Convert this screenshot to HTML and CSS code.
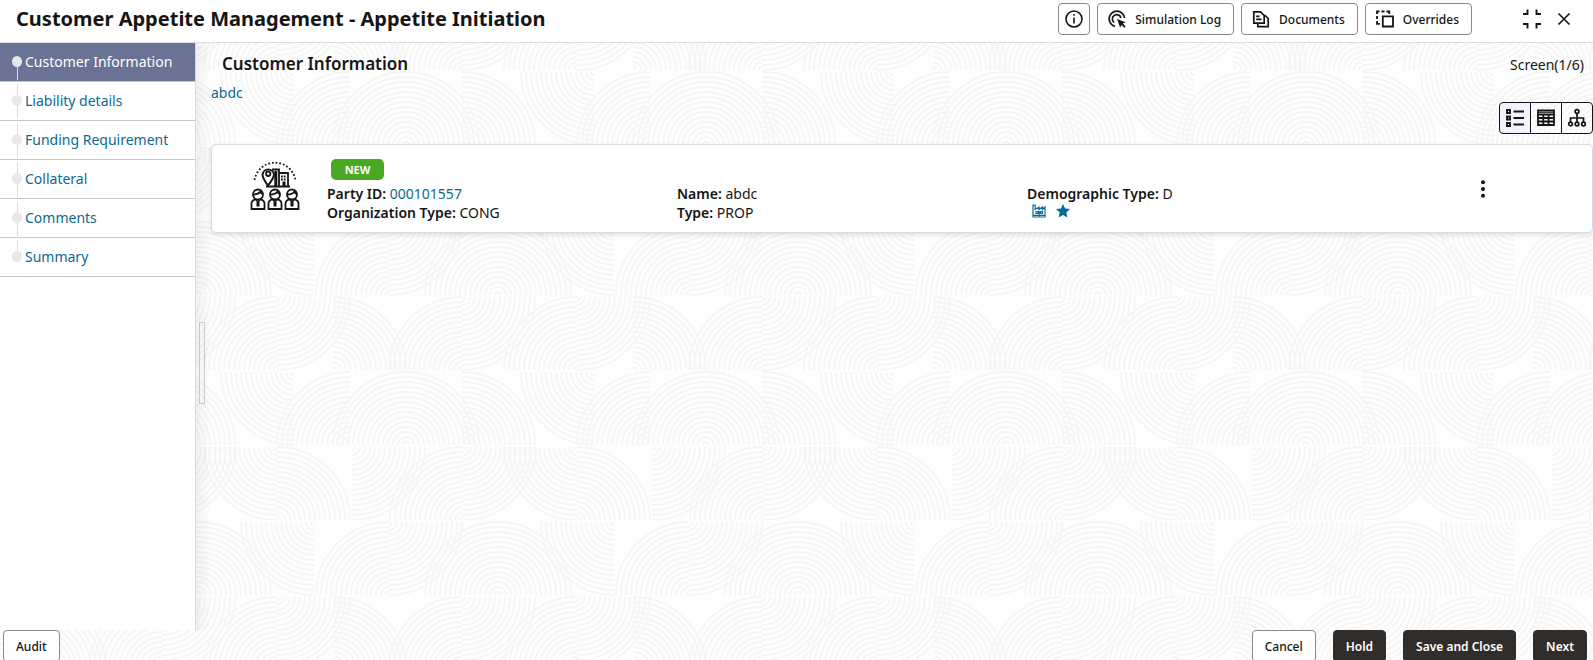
FILE: index.html
```
<!DOCTYPE html>
<html lang="en">
<head>
  <meta charset="UTF-8" />
  <meta name="viewport" content="width=device-width, initial-scale=1.0"/>
  <title>Customer Appetite Management</title>
  <link rel="stylesheet" href="styles.css">
</head>
<body>
  <header class="topbar">
    <h1>Customer Appetite Management - Appetite Initiation</h1>
    <div class="actions">
      <button class="btn btn-info" type="button" aria-label="Information">
        <svg width="20" height="20" viewBox="0 0 20 20" fill="none" stroke="#161513" stroke-width="1.6"><circle cx="10" cy="10" r="8"/><path d="M10 8.5V14.5M10 5V6.8"/></svg>
      </button>
      <button class="btn" type="button">
        <svg width="18" height="18" viewBox="0 0 18 18" fill="none" stroke="#161513" stroke-width="1.7"><path d="M7 16.3A7.7 7.7 0 1 1 16.5 8"/><path d="M6.2 12.6A4.4 4.4 0 1 1 13 8"/><path d="M9 9L17.6 12.2L14.8 13.6L17.6 16.6L16.4 17.8L13.5 14.9L12.1 17.6Z" fill="#161513" stroke="none"/></svg>
        Simulation Log
      </button>
      <button class="btn" type="button">
        <svg width="18" height="18" viewBox="0 0 18 18" fill="none" stroke="#161513" stroke-width="1.7"><path d="M1.8 1.8H8.5L12.2 5.5V13.2H1.8Z"/><path d="M4.2 6.3H7.5M4.2 9.3H9.5M5.8 13.5V16.6H16.2V8.5L12.5 5"/></svg>
        Documents
      </button>
      <button class="btn" type="button">
        <svg width="18" height="18" viewBox="0 0 18 18" fill="none" stroke="#161513" stroke-width="1.8"><path d="M6.8 6.3H17V16.5H6.8Z"/><path d="M1 4V1.5H3.5M5.5 1.5H8.5M10.5 1.5H13.3V4M1 6V9M1 11V13.8H3.8"/></svg>
        Overrides
      </button>
      <div class="window-tools">
        <button class="icon-btn" type="button" aria-label="Collapse">
          <svg width="20" height="20" viewBox="0 0 20 20" fill="none" stroke="#161513" stroke-width="1.9"><path d="M1 5H5.5V0.5M14.5 0.5V5H19M1 15H5.5V19.5M14.5 19.5V15H19"/></svg>
        </button>
        <button class="icon-btn" type="button" aria-label="Close">
          <svg width="14" height="14" viewBox="0 0 14 14" fill="none" stroke="#161513" stroke-width="1.6"><path d="M1.5 1.5L12.5 12.5M12.5 1.5L1.5 12.5"/></svg>
        </button>
      </div>
    </div>
  </header>

  <div class="layout">
    <nav class="steps">
      <a class="step active" href="#info">Customer Information</a>
      <a class="step" href="#liability">Liability details</a>
      <a class="step" href="#funding">Funding Requirement</a>
      <a class="step" href="#collateral">Collateral</a>
      <a class="step" href="#comments">Comments</a>
      <a class="step" href="#summary">Summary</a>
    </nav>

    <div class="splitter"><span class="handle"></span></div>

    <main class="content">
      <div class="heading">
        <h2>Customer Information</h2>
        <span>Screen(1/6)</span>
      </div>
      <a class="crumb" href="#abdc">abdc</a>

      <div class="views">
        <button class="view selected" type="button" aria-label="List view">
          <svg width="20" height="20" viewBox="0 0 20 20" fill="none" stroke="#161513" stroke-width="1.9"><path d="M2 2H5V5H2ZM2 8.5H5V11.5H2ZM2 15H5V18H2ZM8.5 3.5H19M8.5 10H19M8.5 16.5H19"/></svg>
        </button>
        <button class="view" type="button" aria-label="Table view">
          <svg width="20" height="20" viewBox="0 0 20 20" fill="none" stroke="#161513" stroke-width="1.8"><path d="M2 2.5H18V17H2ZM2 6.5H18M2 10H18M2 13.5H18M7.3 6.5V17M12.6 6.5V17"/><path d="M2 4.3H18" stroke-width="1"/></svg>
        </button>
        <button class="view" type="button" aria-label="Tree view">
          <svg width="20" height="20" viewBox="0 0 20 20" fill="none" stroke="#161513" stroke-width="1.7"><circle cx="10" cy="3.5" r="1.9"/><circle cx="3.5" cy="16" r="1.8"/><circle cx="10" cy="16" r="1.8"/><circle cx="16.5" cy="16" r="1.8"/><path d="M10 5.5V14M3.5 14V10H16.5V14"/></svg>
        </button>
      </div>

      <section class="card">
        <svg class="portrait" width="50" height="50" viewBox="0 0 50 50" fill="none" stroke="#161513" stroke-width="1.8">
          <path d="M4.5 20A20.8 20.8 0 0 1 45.5 20" stroke-width="1.8" stroke-dasharray="1.8 1.9"/>
          <path d="M18 25.5C15 21.5 12.5 18 12.5 14.5A5.8 5.8 0 0 1 24 14.5C24 18 21 21.5 18 25.5Z" stroke-width="2"/>
          <circle cx="18.2" cy="13.8" r="2.2"/>
          <path d="M22 9.5H29V26M29 13H38V26M16 26.5H40"/>
          <path d="M25.8 11V26M34 21.5V26" stroke-width="3"/>
          <path d="M31 16.5H36.5M31 19.5H36.5" stroke-dasharray="1.8 1"/>
          <g id="person">
            <circle cx="8" cy="34.5" r="5"/>
            <path d="M3 34.5C7 34.5 9.5 33 10.5 31.5C11 33 12 34 13 34.5M1.5 49V43.5C1.5 41 3.5 40 5.5 39.2L8 42L10.5 39.2C12.5 40 14.5 41 14.5 43.5V49Z"/>
            <path d="M8 42V46.5" stroke-width="3"/>
          </g>
          <use href="#person" x="17"/>
          <use href="#person" x="34"/>
        </svg>
        <div class="party">
          <span class="badge">NEW</span>
          <div class="fields">
            <p><b>Party ID:</b> <a href="#party">000101557</a></p>
            <p><b>Name:</b> abdc</p>
            <p><b>Demographic Type:</b> D</p>
            <p><b>Organization Type:</b> CONG</p>
            <p><b>Type:</b> PROP</p>
            <p class="marks">
              <svg width="14" height="14" viewBox="0 0 14 14" fill="none" stroke="#0b6a93" stroke-width="1.2"><path d="M1 13V1H3.2V5.5L7 3V5.5L10.5 3V5.5L13 3V13ZM4 7.5H6V9.5H4ZM8.5 7.5H10.5V9.5H8.5ZM1 11.3H13M7.2 7V13"/></svg>
              <svg width="14" height="14" viewBox="0 0 14 14" fill="#0b6a93"><path d="M7 0L9.1 4.6L14 5.1L10.3 8.5L11.4 13.5L7 10.9L2.6 13.5L3.7 8.5L0 5.1L4.9 4.6Z"/></svg>
            </p>
          </div>
        </div>
        <button class="icon-btn kebab" type="button" aria-label="More actions">
          <svg width="20" height="20" viewBox="0 0 20 20" fill="#161513"><circle cx="10" cy="3.3" r="2"/><circle cx="10" cy="10" r="2"/><circle cx="10" cy="16.7" r="2"/></svg>
        </button>
      </section>
    </main>
  </div>

  <footer class="footer">
    <button class="btn" type="button">Audit</button>
    <div class="footer-actions">
      <button class="btn" type="button">Cancel</button>
      <button class="btn btn-dark" type="button">Hold</button>
      <button class="btn btn-dark" type="button">Save and Close</button>
      <button class="btn btn-dark" type="button">Next</button>
    </div>
  </footer>
</body>
</html>
```
FILE: styles.css
```
* {
  box-sizing: border-box;
}
body {
  margin: 0;
  height: 100vh;
  overflow: hidden;
  display: flex;
  flex-direction: column;
  font-family: "Noto Sans", sans-serif;
  font-size: 14px;
  line-height: 19px;
  color: #161513;
  background-color: #fefefe;
  /* rows of quarter circles, 75px high, repeating every 300px */
  background-image: url("data:image/svg+xml,%3Csvg xmlns='http://www.w3.org/2000/svg' width='300' height='300'%3E%3Cdefs%3E%3Cpath id='q' d='M3 0A3 3 0 0 1 0 3M8 0A8 8 0 0 1 0 8M13 0A13 13 0 0 1 0 13M18 0A18 18 0 0 1 0 18M23 0A23 23 0 0 1 0 23M28 0A28 28 0 0 1 0 28M33 0A33 33 0 0 1 0 33M38 0A38 38 0 0 1 0 38M43 0A43 43 0 0 1 0 43M48 0A48 48 0 0 1 0 48M53 0A53 53 0 0 1 0 53M58 0A58 58 0 0 1 0 58M63 0A63 63 0 0 1 0 63M68 0A68 68 0 0 1 0 68M73 0A73 73 0 0 1 0 73'/%3E%3Cg id='dr'%3E%3Cuse href='%23q'/%3E%3C/g%3E%3Cg id='dl'%3E%3Cuse href='%23q' transform='scale(-1 1)'/%3E%3C/g%3E%3Cg id='ur'%3E%3Cuse href='%23q' transform='scale(1 -1)'/%3E%3C/g%3E%3Cg id='ul'%3E%3Cuse href='%23q' transform='scale(-1 -1)'/%3E%3C/g%3E%3C/defs%3E%3Cg fill='none' stroke='%23f5f5f5' stroke-width='1.8'%3E%3Cuse href='%23ur' x='198' y='75'/%3E%3Cuse href='%23ul' x='198' y='75'/%3E%3Cuse href='%23dl' x='14' y='2'/%3E%3Cuse href='%23dl' x='314' y='2'/%3E%3Cuse href='%23ul' x='89' y='75'/%3E%3Cuse href='%23dr' x='89' y='2'/%3E%3Cuse href='%23ul' x='277' y='150'/%3E%3Cuse href='%23dr' x='277' y='77'/%3E%3Cuse href='%23dr' x='-23' y='77'/%3E%3Cuse href='%23ur' x='33' y='150'/%3E%3Cuse href='%23ul' x='162' y='150'/%3E%3Cuse href='%23dr' x='162' y='77'/%3E%3Cuse href='%23dl' x='294' y='152'/%3E%3Cuse href='%23ul' x='50' y='225'/%3E%3Cuse href='%23ul' x='350' y='225'/%3E%3Cuse href='%23ul' x='106' y='225'/%3E%3Cuse href='%23ur' x='106' y='225'/%3E%3Cuse href='%23ur' x='162' y='225'/%3E%3Cuse href='%23dl' x='277' y='227'/%3E%3Cuse href='%23ur' x='277' y='300'/%3E%3Cuse href='%23ur' x='-23' y='300'/%3E%3Cuse href='%23dr' x='52' y='227'/%3E%3Cuse href='%23ul' x='163' y='300'/%3E%3Cuse href='%23dr' x='163' y='227'/%3E%3C/g%3E%3C/svg%3E");
  background-position: 0 -80px;
}
h1, h2, p {
  margin: 0;
}
h1 {
  font-size: 20px;
  line-height: 28px;
  font-weight: 700;
}
h2 {
  font-size: 17px;
  line-height: 24px;
  font-weight: 600;
}
b {
  font-weight: 600;
}
a {
  color: #0b6a93;
  text-decoration: none;
}
svg {
  display: block;
  flex: none;
}

/* header */
.topbar {
  display: flex;
  align-items: center;
  justify-content: space-between;
  height: 43px;
  padding: 0 22px 4px 16px;
  background-color: #fff;
  border-bottom: 1px solid #dedede;
}
.actions {
  display: flex;
  gap: 7px;
}
.btn {
  display: flex;
  align-items: center;
  gap: 9px;
  height: 32px;
  padding: 0 12px 0 10px;
  border: 1px solid #8b8a88;
  border-radius: 4px;
  background-color: #fff;
  color: #161513;
  font-family: inherit;
  font-size: 12px;
  font-weight: 500;
}
.btn-info {
  padding: 0 5px;
}
.window-tools {
  display: flex;
  align-items: center;
  gap: 15px;
  margin-left: 43px;
}
.icon-btn {
  padding: 0;
  border: 0;
  background: none;
}

/* step list */
.layout {
  flex: 1;
  display: flex;
  min-height: 0;
}
.steps {
  width: 196px;
  background-color: #fff;
  border-right: 1px solid #d1dce5;
}
.step {
  position: relative;
  display: block;
  height: 39px;
  padding: 9px 0 0 25px;
  border-bottom: 1px solid #c8c8c8;
}
.step::before {
  content: "";
  position: absolute;
  left: 17px;
  top: 2px;
  bottom: 1px;
  width: 1px;
  background-color: #dcdcdc;
}
.step::after {
  content: "";
  position: absolute;
  left: 12px;
  top: 13px;
  width: 10px;
  height: 11px;
  border-radius: 50%;
  background-color: #e8e8e8;
}
.step.active {
  background-color: #6b7394;
  color: #fff;
}
.step.active::before {
  top: 14px;
}
.step:last-child::before {
  bottom: 14px;
}

.splitter {
  display: flex;
  align-items: center;
  width: 15px;
  padding: 52px 0 0 3px;
  background-image: linear-gradient(to right, rgba(0, 0, 0, 0.05), transparent);
}
.handle {
  width: 6px;
  height: 82px;
  border: 1px solid #d0c8c4;
}

/* content */
.content {
  flex: 1;
  min-width: 0;
}
.heading {
  display: flex;
  align-items: center;
  justify-content: space-between;
  padding: 9px 9px 0 11px;
}
.crumb {
  display: block;
  margin-top: 7px;
}
.views {
  display: flex;
  justify-content: flex-end;
}
.view {
  display: flex;
  align-items: center;
  justify-content: center;
  width: 32px;
  height: 32px;
  margin-left: -1px;
  padding: 0;
  border: 1px solid #161513;
  background: none;
}
.view:first-child {
  border-radius: 4px 0 0 4px;
}
.view:last-child {
  border-radius: 0 4px 4px 0;
}
.view.selected {
  background-color: #f0f2fc;
}
.card {
  display: flex;
  margin-top: 10px;
  padding: 14px 99px 10px 38px;
  background-color: #fff;
  border: 1px solid #d1dce5;
  border-radius: 5px;
  box-shadow: 0 2px 5px rgba(0, 0, 0, 0.12);
}
.portrait {
  margin-top: 1px;
}
.party {
  flex: 1;
  padding-left: 27px;
}
.badge {
  display: block;
  width: 53px;
  margin-left: 4px;
  border-radius: 5px;
  background-color: #4aa823;
  color: #fff;
  font-size: 11px;
  line-height: 21px;
  font-weight: 700;
  text-align: center;
}
.fields {
  display: grid;
  grid-template-columns: repeat(3, 1fr);
  margin-top: 4px;
  padding-right: 96px;
}
.marks {
  display: flex;
  gap: 10px;
  padding: 1px 0 0 5px;
}
.kebab {
  align-self: center;
  padding-bottom: 4px;
}

/* footer */
.footer {
  display: flex;
  justify-content: space-between;
  height: 30px;
  padding: 0 6px 0 3px;
}
.footer .btn {
  height: 32px;
  padding: 0 12px;
}
.footer .btn-dark {
  background-color: #312d2a;
  border-color: #312d2a;
  color: #fff;
  font-weight: 600;
}
.footer-actions {
  display: flex;
  gap: 17px;
}
```
